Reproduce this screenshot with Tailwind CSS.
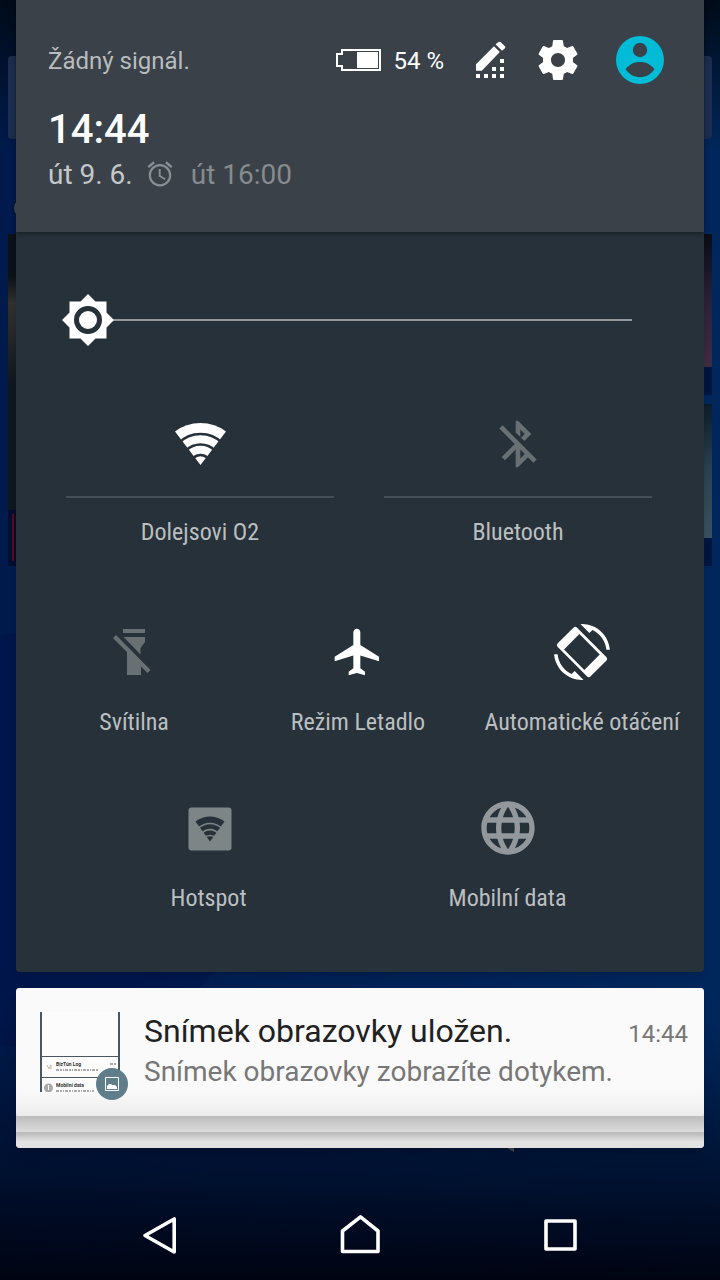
<!DOCTYPE html>
<html lang="cs">
<head>
<meta charset="utf-8">
<meta name="viewport" content="width=device-width, initial-scale=1">
<title>Rychlé nastavení</title>
<script src="https://cdn.jsdelivr.net/npm/@tailwindcss/browser@4"></script>
</head>
<body class="relative flex min-h-screen flex-col overflow-x-hidden bg-[#001a48] font-[Roboto,sans-serif]">

<!-- Dimmed home screen behind the shade -->
<div aria-hidden="true" class="absolute inset-0 -z-10 overflow-hidden bg-linear-to-r from-[#001a4c] to-[#00275c]">
  <div class="absolute inset-0 bg-linear-to-b from-[#000b18] from-0% via-transparent via-12% to-transparent"></div>
  <div class="absolute -left-40 top-[630px] size-[420px] rounded-full bg-[#000f45]/40"></div>
  <div class="absolute inset-x-0 bottom-0 h-[260px] bg-linear-to-b from-transparent via-[#000c24]/75 via-60% to-[#000412]"></div>
  <div class="absolute inset-x-2 top-14 h-[83px] rounded bg-[#1c2c4e]"></div>
  <div class="absolute left-3.5 top-[198px] h-5 w-6 rounded-full border-2 border-[#4c5052]"></div>
  <div class="absolute left-2 top-[234px] h-[276px] w-4 bg-linear-to-b from-[#0b1116] from-15% via-[#33302f] via-25% to-[#0d181d] to-55%"></div>
  <div class="absolute left-2 top-[510px] h-14 w-4 bg-[#020d30]"></div>
  <div class="absolute left-3 top-[514px] h-[47px] w-0.5 bg-[#5a0a18]"></div>
  <div class="absolute right-2 top-[234px] h-[133px] w-4 bg-linear-to-b from-[#090d17] via-[#2a2138] via-50% to-[#402c42]"></div>
  <div class="absolute right-2 top-[367px] h-7 w-4 bg-[#00163f]"></div>
  <div class="absolute right-2 top-[404px] h-[134px] w-4 bg-linear-to-b from-[#0c1d2a] via-[#2a4350] via-50% to-[#395060]"></div>
  <div class="absolute right-2 top-[538px] h-7 w-4 bg-[#00163f]"></div>
  <svg class="absolute left-[504px] top-[1146px] h-1.5 w-2.5" viewBox="0 0 10 6"><path d="M0 0h10v6z" fill="#4a4742"/></svg>
</div>

<main class="px-4">
  <section class="rounded-b bg-[#27313a] shadow-md" aria-label="Rychlé nastavení">
    <header class="relative h-[232px] bg-[#3a4148] pl-8 pr-10 pt-9 shadow-[0_2px_4px_rgba(0,0,0,0.35)]">
      <div class="flex h-12 items-center">
        <p class="mr-auto pt-0.5 text-2xl text-[#b9bcbe]">Žádný signál.</p>
        <svg class="mr-3 h-[22px] w-[45px]" viewBox="0 0 45 22" aria-hidden="true"><path d="M6 1h38v20H6v-4H1V5h5z" fill="none" stroke="#fff" stroke-width="2"/><path d="M21 3h21v16H21z" fill="#fff"/></svg>
        <span class="mr-[22px] pt-0.5 text-2xl text-white">54 %</span>
        <button type="button" aria-label="Upravit" class="mr-5 size-12">
          <svg class="size-12" viewBox="0 0 48 48" fill="#fff"><path d="M10 28.3 28 10.3l5.8 5.8-18 18.6H10zM29.5 8.3l3-2.3q1-.7 2 0l4.5 4.3q.7 1 0 2L36 14.8zM10 38h4v4h-4zM18 38h4v4h-4zM26 38h4v4h-4zM34 38h4v4h-4zM26 31h4v4h-4zM34 31h4v4h-4zM34 23h4v4h-4z"/></svg>
        </button>
        <button type="button" aria-label="Nastavení" class="mr-[34px] size-12">
          <svg class="size-12" viewBox="0 0 24 24" fill="#fff"><path d="M19.43 12.98c.04-.32.07-.64.07-.98s-.03-.66-.07-.98l2.11-1.65c.19-.15.24-.42.12-.64l-2-3.46c-.12-.22-.39-.3-.61-.22l-2.49 1c-.52-.4-1.08-.73-1.69-.98l-.38-2.65C14.46 2.18 14.25 2 14 2h-4c-.25 0-.46.18-.49.42l-.38 2.65c-.61.25-1.17.59-1.69.98l-2.49-1c-.23-.09-.49 0-.61.22l-2 3.46c-.13.22-.07.49.12.64l2.11 1.65c-.04.32-.07.65-.07.98s.03.66.07.98l-2.11 1.65c-.19.15-.24.42-.12.64l2 3.46c.12.22.39.3.61.22l2.49-1c.52.4 1.08.73 1.69.98l.38 2.65c.03.24.24.42.49.42h4c.25 0 .46-.18.49-.42l.38-2.65c.61-.25 1.17-.59 1.69-.98l2.49 1c.23.09.49 0 .61-.22l2-3.46c.12-.22.07-.49-.12-.64l-2.11-1.65zM12 15.5c-1.93 0-3.5-1.57-3.5-3.5s1.57-3.5 3.5-3.5 3.5 1.57 3.5 3.5-1.57 3.5-3.5 3.5z"/></svg>
        </button>
        <button type="button" aria-label="Uživatel" class="size-12">
          <svg class="size-12" viewBox="0 0 48 48"><circle cx="24" cy="24" r="24" fill="#00bcd6"/><circle cx="24" cy="14" r="7.2" fill="#3a4148"/><path d="M9.6 33.3C13 28.5 18 26 24 26s11 2.5 14.4 7.3C35 38.3 30 41.2 24 41.2S13 38.3 9.6 33.3z" fill="#3a4148"/></svg>
        </button>
      </div>
      <p class="mt-[22px] text-[40px] font-medium leading-[48px] text-white">14:44</p>
      <div class="mt-[3px] flex h-9 items-center text-[28px] leading-9">
        <span class="text-[#c4c7c8]">út 9. 6.</span>
        <svg class="ml-[11px] mr-[15px] size-8 pb-0.5" viewBox="0 0 24 24" fill="#8a8f93" aria-hidden="true"><path d="M22 5.72l-4.6-3.86-1.29 1.53 4.6 3.86L22 5.72zM7.88 3.39L6.6 1.86 2 5.71l1.29 1.53 4.59-3.85zM12.5 8H11v6l4.75 2.85.75-1.23-4-2.37V8zM12 4c-4.97 0-9 4.03-9 9s4.02 9 9 9c4.97 0 9-4.03 9-9s-4.03-9-9-9zm0 16.2c-3.98 0-7.2-3.22-7.2-7.2s3.22-7.2 7.2-7.2 7.2 3.22 7.2 7.2-3.22 7.2-7.2 7.2z"/></svg>
        <span class="text-[#868b8f]">út 16:00</span>
      </div>
    </header>

    <div class="pb-[58px] pt-14 font-['Roboto_Condensed','Liberation_Sans_Narrow',Roboto,sans-serif] text-2xl leading-8 text-[#bbbfc0]">
      <div class="relative mx-10 flex h-16 items-center">
        <span class="ml-8 mr-8 h-0.5 grow bg-[#93989c]"></span>
        <svg class="absolute left-0 top-0 size-16" viewBox="0 0 64 64" aria-hidden="true"><path d="M32 6l7.5 7.5H50.5V24.5L58 32l-7.5 7.5V50.5H39.5L32 58l-7.5-7.5H13.5V39.5L6 32l7.5-7.5V13.5H24.5z" fill="#fff"/><circle cx="32" cy="32" r="11.5" fill="#fff" stroke="#27313a" stroke-width="5"/></svg>
        <input type="range" min="0" max="100" value="0" aria-label="Jas" class="absolute inset-0 h-full w-full opacity-0">
      </div>

      <div class="mt-[60px] grid grid-cols-2 pl-[25px] pr-[27px]">
        <button type="button" class="flex flex-col items-center">
          <svg class="size-16" viewBox="0 0 64 64" aria-hidden="true"><path d="M32.5 53 7 19.5Q18 11 32.5 11T58 19.5z" fill="#fff"/><g fill="none" stroke="#27313a" stroke-width="2.5"><circle cx="32.5" cy="53" r="31"/><circle cx="32.5" cy="53" r="20.5"/><circle cx="32.5" cy="53" r="10"/></g></svg>
          <span class="mt-5 h-0.5 w-full border-x-[25px] border-transparent bg-[#454f57] bg-clip-padding"></span>
          <span class="mt-[18px]">Dolejsovi O2</span>
        </button>
        <button type="button" class="flex flex-col items-center">
          <svg class="size-16 p-1" viewBox="0 0 24 24" fill="#687073" aria-hidden="true"><path d="M13 5.83l1.88 1.88-1.6 1.6 1.41 1.41 3.02-3.02L12 2h-1v5.03l2 2v-3.2zM5.41 4L4 5.41 10.59 12 5 17.59 6.41 19 11 14.41V22h1l4.29-4.29 2.3 2.29L20 18.59 5.41 4zM13 18.17v-3.76l1.88 1.88L13 18.17z"/></svg>
          <span class="mt-5 h-0.5 w-full border-x-[25px] border-transparent bg-[#454f57] bg-clip-padding"></span>
          <span class="mt-[18px]">Bluetooth</span>
        </button>
      </div>

      <div class="mt-[72px] grid grid-cols-3 pl-1.5 pr-2.5">
        <button type="button" class="flex flex-col items-center">
          <svg class="size-16" viewBox="0 0 64 64" fill="#687073" aria-hidden="true"><path d="M21 9h22v4H21zM21.5 17H43v5l-4.5 6v6.5zM11 18l3-3 34.5 35-3 3L39 46.5V55H25V32z"/></svg>
          <span class="mt-[22px] whitespace-nowrap">Svítilna</span>
        </button>
        <button type="button" class="flex flex-col items-center">
          <svg class="size-16 p-1" viewBox="0 0 24 24" fill="#fff" aria-hidden="true"><path d="M21 16v-2l-8-5V3.5c0-.83-.67-1.5-1.5-1.5S10 2.67 10 3.5V9l-8 5v2l8-2.5V19l-2 1.5V22l3.5-1 3.5 1v-1.5L13 19v-5.5l8 2.5z"/></svg>
          <span class="mt-[22px] whitespace-nowrap">Režim Letadlo</span>
        </button>
        <button type="button" class="flex flex-col items-center">
          <svg class="size-16 p-1" viewBox="0 0 24 24" fill="#fff" fill-rule="evenodd" aria-hidden="true"><path d="M16.48 2.52c3.27 1.55 5.61 4.72 5.97 8.48h1.5C23.44 4.84 18.29 0 12 0l-.66.03 3.81 3.81 1.33-1.32zM9.9 1.6c-.5-.5-1.1-.5-1.6 0L1.6 8.3c-.5.5-.5 1.1 0 1.6l12.5 12.5c.5.5 1.1.5 1.6 0l6.7-6.7c.5-.5.5-1.1 0-1.6zM10.86 4.3l8.74 8.8-6.6 6.6-8.7-8.8zM7.52 21.48C4.25 19.94 1.91 16.76 1.55 13H.05C.56 19.16 5.71 24 12 24l.66-.03-3.81-3.81-1.33 1.32z"/></svg>
          <span class="mt-[22px] whitespace-nowrap">Automatické otáčení</span>
        </button>
      </div>

      <div class="mt-[58px] grid grid-cols-2 pl-[43px] pr-[47px]">
        <button type="button" class="flex flex-col items-center">
          <svg class="size-16" viewBox="0 0 64 64" aria-hidden="true"><rect x="11.5" y="11.5" width="43" height="43" rx="3" fill="#7d8587"/><path d="M33 45.5 18.5 25.5Q25.5 20.5 33 20.5T47.500 25.5z" fill="#27313a"/><path d="M20.5 32.5Q33 22.6 45.5 32.5M22.5 39.3Q33 28 43.500 39.3M26.5 42Q33 37 39.5 42" fill="none" stroke="#7d8587" stroke-width="1.6"/></svg>
          <span class="mt-[22px]">Hotspot</span>
        </button>
        <button type="button" class="flex flex-col items-center">
          <svg class="size-16" viewBox="0 0 24 24" fill="#93989c" aria-hidden="true"><path d="M11.99 2C6.47 2 2 6.48 2 12s4.47 10 9.99 10C17.52 22 22 17.52 22 12S17.52 2 11.99 2zm6.93 6h-2.95c-.32-1.25-.78-2.45-1.38-3.56 1.84.63 3.37 1.91 4.33 3.56zM12 4.04c.83 1.2 1.48 2.53 1.91 3.96h-3.82c.43-1.43 1.08-2.76 1.91-3.96zM4.26 14C4.1 13.36 4 12.69 4 12s.1-1.36.26-2h3.38c-.08.66-.14 1.32-.14 2 0 .68.06 1.34.14 2H4.26zm.82 2h2.95c.32 1.25.78 2.45 1.38 3.56-1.84-.63-3.37-1.9-4.33-3.56zm2.95-8H5.08c.96-1.66 2.49-2.93 4.33-3.56C8.81 5.55 8.35 6.75 8.03 8zM12 19.96c-.83-1.2-1.48-2.53-1.91-3.96h3.82c-.43 1.43-1.08 2.76-1.91 3.96zM14.34 14H9.66c-.09-.66-.16-1.32-.16-2 0-.68.07-1.35.16-2h4.68c.09.65.16 1.32.16 2 0 .68-.07 1.34-.16 2zm.25 5.56c.6-1.11 1.06-2.31 1.38-3.56h2.95c-.96 1.65-2.49 2.93-4.33 3.56zM16.36 14c.08-.66.14-1.32.14-2 0-.68-.06-1.34-.14-2h3.38c.16.64.26 1.31.26 2s-.1 1.36-.26 2h-3.38z"/></svg>
          <span class="mt-[22px]">Mobilní data</span>
        </button>
      </div>
    </div>
  </section>

  <section class="mt-4 overflow-hidden rounded bg-[#dfdfdf] shadow-lg" aria-label="Oznámení">
    <article class="flex h-32 gap-6 rounded-b bg-linear-to-b from-[#fafafa] from-80% to-[#ececec] pl-6 pr-4 pt-6">
      <div class="relative size-20 shrink-0">
        <svg class="size-20" viewBox="0 0 80 80" aria-hidden="true">
          <path d="M0 0h80v80H0z" fill="#fcfcfc"/><path d="M0 0h2v80H0zM78 0h2v80h-2zM0 44h80v1H0zM0 65h80v1H0z" fill="#4c565f"/>
          <path d="m7 53 2 4 2-4v4" stroke="#b9bd9a" fill="none"/><circle cx="8.5" cy="76" r="4.5" fill="#aaa"/><path d="M8.5 73v5" stroke="#fff"/>
          <text x="16" y="54" font-size="5" font-weight="700" fill="#333">BizTún Log</text>
          <text x="16" y="75" font-size="5" font-weight="700" fill="#333">Mobilní data</text>
          <path d="M16 58h42M16 79h38M70 52h7" stroke="#aaa" stroke-width="2" stroke-dasharray="3 1 2 1 1 1"/>
        </svg>
        <svg class="absolute -bottom-2 -right-2 size-8" viewBox="0 0 32 32" aria-hidden="true"><circle cx="16" cy="16" r="16" fill="#607d8b"/><path d="M9.5 9.5h13v13h-13z" fill="none" stroke="#fff"/><path d="M11 21v-3l2-2h2l1 1h3l2 2v2z" fill="#fff"/></svg>
      </div>
      <div class="min-w-0 grow">
        <div class="flex h-10 items-baseline justify-between">
          <h2 class="whitespace-nowrap text-[32px] leading-[38px] text-[#212121]">Snímek obrazovky uložen.</h2>
          <time class="text-2xl leading-8 text-[#777]">14:44</time>
        </div>
        <p class="whitespace-nowrap text-[28px] leading-10 text-[#777]">Snímek obrazovky zobrazíte dotykem.</p>
      </div>
    </article>
    <div class="h-4 rounded-b bg-linear-to-b from-[#bcbcbc] to-[#dcdcdc]"></div>
    <div class="h-4 bg-linear-to-b from-[#b8b8b8] to-[#e2e2e2] to-60%"></div>
  </section>
</main>

<nav class="mt-auto grid h-[90px] grid-cols-3 px-[60px]" aria-label="Navigace">
  <button type="button" aria-label="Zpět" class="flex justify-center pt-[21px]"><svg class="size-12" viewBox="0 0 48 48" fill="none" stroke="#fff" stroke-width="3.6" stroke-linejoin="round"><path d="M38.2 8v33L9 24.5z"/></svg></button>
  <button type="button" aria-label="Domů" class="flex justify-center pt-[21px]"><svg class="size-12" viewBox="0 0 48 48" fill="none" stroke="#fff" stroke-width="3.6" stroke-linejoin="round"><path d="M6.5 40.5V20L24.5 5.8 42 20v20.5z"/></svg></button>
  <button type="button" aria-label="Poslední aplikace" class="flex justify-center pt-[21px]"><svg class="size-12" viewBox="0 0 48 48" fill="none" stroke="#fff" stroke-width="3.6" stroke-linejoin="round"><path d="M10 10h29v28H10z"/></svg></button>
</nav>
</body>
</html>
